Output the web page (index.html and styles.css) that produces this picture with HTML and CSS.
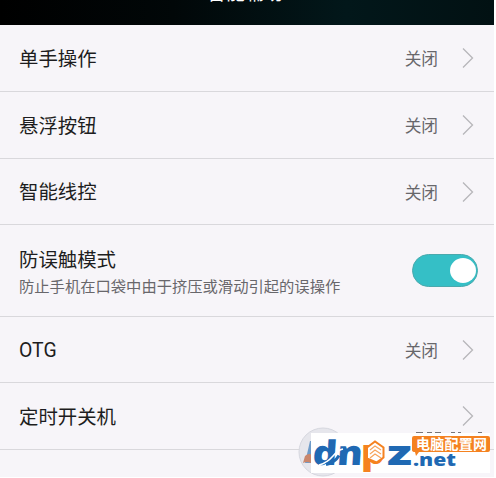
FILE: index.html
```html
<!DOCTYPE html>
<html lang="zh-CN">
<head>
<meta charset="utf-8">
<title>智能辅助</title>
<link rel="stylesheet" href="styles.css">
</head>
<body>
<main class="screen">
  <header class="header"><h1 class="title">智能辅助</h1></header>
  <ul class="list">
    <li class="row"><span class="label">单手操作</span><span class="value">关闭</span><svg class="chevron" viewBox="0 0 12 22"><path d="M1 1.5 10.5 11 1 20.5"/></svg></li>
    <li class="row"><span class="label">悬浮按钮</span><span class="value">关闭</span><svg class="chevron" viewBox="0 0 12 22"><path d="M1 1.5 10.5 11 1 20.5"/></svg></li>
    <li class="row short"><span class="label">智能线控</span><span class="value">关闭</span><svg class="chevron" viewBox="0 0 12 22"><path d="M1 1.5 10.5 11 1 20.5"/></svg></li>
    <li class="row tall">
      <div class="text"><span class="label">防误触模式</span><span class="note">防止手机在口袋中由于挤压或滑动引起的误操作</span></div>
      <span class="switch"><span class="knob"></span></span>
    </li>
    <li class="row short"><span class="label">OTG</span><span class="value">关闭</span><svg class="chevron" viewBox="0 0 12 22"><path d="M1 1.5 10.5 11 1 20.5"/></svg></li>
    <li class="row"><span class="label">定时开关机</span><svg class="chevron" viewBox="0 0 12 22"><path d="M1 1.5 10.5 11 1 20.5"/></svg></li>
  </ul>
  <svg class="watermark" viewBox="0 0 198 52" width="198" height="52">
    <circle cx="27" cy="27" r="24" fill="#e6e6ec" stroke="#d6d7df"/>
    <path d="M9 38 14 16h10L20 38z" fill="#6e9bc9"/>
    <path d="M9 31q4-4 9 0l-3 7q-4-2-8 0z" fill="#c9866c"/>
    <path d="M120 7.500h7M131 7.500h5M139 7.500h6M155 7.500h4M162 7.500h3M182 7.500h4" stroke="#77767a"/>
    <rect x="15" y="8" width="179" height="40" fill="#fff"/>
    <g transform="translate(16 40) skewX(-4)"><text class="mark" textLength="50" lengthAdjust="spacingAndGlyphs">dn</text></g>
    <path d="M23 40q8-2 14-9 5-6 10-7" fill="none" stroke="#fff" stroke-width="1.500"/>
    <path d="M30 39.500q9-2 13-9" fill="none" stroke="#1f69b3" stroke-width="3"/>
    <text class="mark orange" x="65" y="39" textLength="24" lengthAdjust="spacingAndGlyphs">p</text>
    <path d="M71 22.500 79 16.500l8.500 6v10l-7 5-9.500-4z" fill="#fff" stroke="#f58220" stroke-width="2"/>
    <path d="m74 25 5-4 6 4M74 29l5-4 6 4M74 33l5-4 6 4" fill="none" stroke="#f7a45c" stroke-width="1.200"/>
    <text class="mark" x="91" y="40" textLength="25" lengthAdjust="spacingAndGlyphs">z</text>
    <text class="net" x="117" y="41" textLength="43" lengthAdjust="spacingAndGlyphs">.net</text>
    <path d="M118 11h74q2 0 2 2v12q0 2-2 2h-69l-3 4-1-4q-3 0-3-2V13q0-2 2-2z" fill="#f58220"/>
    <text class="site" x="120" y="24" textLength="71">电脑配置网</text>
  </svg>
</main>
</body>
</html>
```
FILE: styles.css
```css
* { box-sizing: border-box; }
body { margin: 0; background: #fff; font-family: Roboto, "Noto Sans CJK SC", sans-serif; }
.screen { position: relative; width: 494px; height: 477px; background: #f7f5f9; overflow: hidden; }
.header { height: 25px; overflow: hidden; display: flex; justify-content: center; align-items: flex-start; background: linear-gradient(90deg, #000, #010708 35%, #02171a 70%, #021113); }
.title { margin: -17px 4px 0 0; font-size: 19px; line-height: 22px; font-weight: 400; color: #fff; }
.list { margin: 0; padding: 0; list-style: none; }
.row { display: flex; align-items: center; height: 67px; padding: 0 20px 0 19px; border-bottom: 1px solid #d9d8dc; }
.short { height: 66px; }
.tall { height: 92px; padding-right: 16px; }
.label { flex: 1; padding-top: 3px; font-size: 19.4px; line-height: 28px; color: #1d1d20; white-space: nowrap; }
.text { flex: 1; display: flex; flex-direction: column; }
.text .label { padding-top: 2px; }
.note { font-size: 15.3px; line-height: 24px; margin-bottom: -2px; color: #68676b; white-space: nowrap; }
.value { padding-top: 4px; font-size: 16.7px; line-height: 24px; color: #68676b; }
.chevron { width: 12px; height: 22px; margin-left: 24px; fill: none; stroke: #b7b6ba; stroke-width: 1.3; }
.switch { width: 66px; height: 33px; padding: 3px 1px; border-radius: 17px; background: #35bfc6; border: 1px solid #4aa9ad; display: flex; justify-content: flex-end; }
.knob { width: 26px; height: 25px; border-radius: 50%; background: #fff; }
.watermark { position: absolute; left: 296px; top: 425px; }
.mark { font: 800 34px "Open Sans", sans-serif; fill: #1f69b3; }
.orange { fill: #f58220; }
.net { font: 800 18px "Open Sans", sans-serif; fill: #1f69b3; }
.site { font: 700 14px "Noto Sans CJK SC", sans-serif; fill: #fff; }
```
